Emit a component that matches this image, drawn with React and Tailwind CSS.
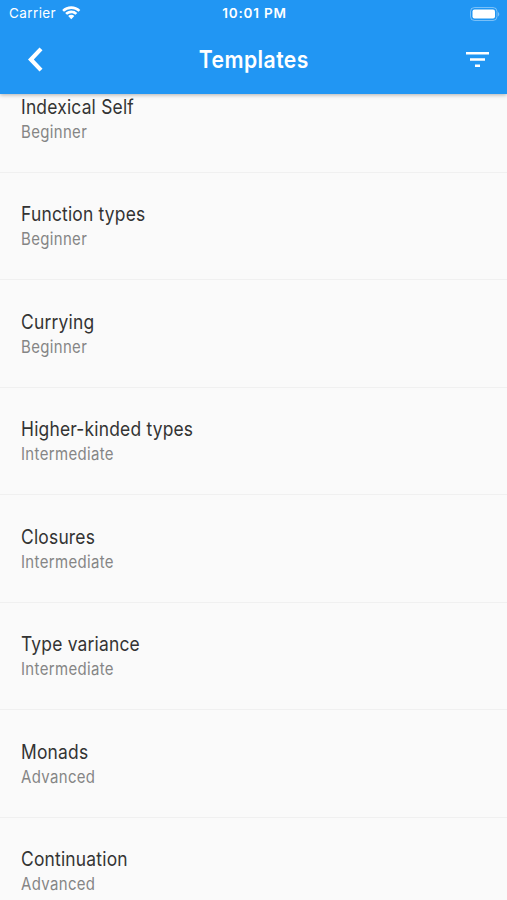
const templates = [
  { title: 'Indexical Self', level: 'Beginner' },
  { title: 'Function types', level: 'Beginner' },
  { title: 'Currying', level: 'Beginner' },
  { title: 'Higher-kinded types', level: 'Intermediate' },
  { title: 'Closures', level: 'Intermediate' },
  { title: 'Type variance', level: 'Intermediate' },
  { title: 'Monads', level: 'Advanced' },
  { title: 'Continuation', level: 'Advanced' },
]

const StatusBar = () => (
  <div className="grid h-[28px] grid-cols-3 items-center pl-[9px] pr-[7px] text-[13.5px] leading-none">
    <div className="flex items-center gap-[6px]">
      <span className="tracking-[0.4px]">Carrier</span>
      <svg className="mb-[2px]" width="18.500" height="14" viewBox="0 0 18 13" fill="currentColor">
        <path d="M9 0C5.600 0 2.500 1.300.2 3.500l1.700 1.800A10.200 10.200 0 0 1 9 2.500c2.700 0 5.200 1 7.100 2.800l1.700-1.800A12.700 12.700 0 0 0 9 0z" />
        <path d="M9 4.100c-2.300 0-4.300.9-5.900 2.300l1.800 1.900A6 6 0 0 1 9 6.700c1.600 0 3 .6 4.100 1.600l1.800-1.900A8.600 8.600 0 0 0 9 4.100z" />
        <path d="M9 8.200c-1.200 0-2.200.4-3 1.200l3 3.100 3-3.100c-.8-.8-1.800-1.200-3-1.200z" />
      </svg>
    </div>
    <span className="text-center font-semibold tracking-[0.8px]">10:01 PM</span>
    <svg className="mb-px justify-self-end" width="30" height="14" viewBox="0 0 30 14">
      <rect x="0.500" y="0.500" width="26.500" height="13" rx="4" fill="none" stroke="white" strokeOpacity="0.4" />
      <rect x="2.500" y="2.500" width="22.500" height="9" rx="2" fill="white" />
      <path d="M28 5v4.500c1.800-.7 1.800-3.800 0-4.500z" fill="white" fillOpacity="0.4" />
    </svg>
  </div>
)

const AppBar = () => (
  <header className="relative z-10 h-[94px] shrink-0 bg-[#2196f3] font-[Inter,sans-serif] text-white shadow-[0_1px_4px_rgba(0,0,0,0.3)]">
    <StatusBar />
    <div className="grid h-[63px] grid-cols-3 items-center pl-[28px] pr-[18px]">
      <button aria-label="Back">
        <svg width="15" height="25" viewBox="0 0 15 25" fill="currentColor">
          <path d="M14.500 3.200 11.500.5 0 12.500l11.500 12 3-2.700-8.700-9.300z" />
        </svg>
      </button>
      <h1 className="-ml-[10px] origin-center scale-x-[0.88] text-center text-[24px] font-semibold tracking-[0.5px]">
        Templates
      </h1>
      <button aria-label="Filter" className="justify-self-end">
        <svg width="23" height="16" viewBox="0 0 23 16" fill="currentColor">
          <path d="M0 0h23v2.500H0zM4 6.300h15v2.500H4zM9 12.500h5V15H9z" />
        </svg>
      </button>
    </div>
  </header>
)

const TemplateRow = ({ title, level }) => (
  <li className="flex h-[107.500px] shrink-0 flex-col justify-center border-b border-[#f0f0f0] pl-[20.500px] pt-[3px]">
    <p className="origin-left scale-x-[0.87] text-[20px] leading-[25px] tracking-[0.24px] text-[#333333]">{title}</p>
    <p className="origin-left scale-x-[0.88] text-[17px] leading-[25px] tracking-[0.4px] text-[#858585]">{level}</p>
  </li>
)

const App = () => (
  <div className="flex h-screen flex-col overflow-hidden bg-[#fafafa] font-[Inter,sans-serif]">
    <AppBar />
    <ul className="-mt-[29px] flex flex-col">
      {templates.map((template) => (
        <TemplateRow key={template.title} title={template.title} level={template.level} />
      ))}
    </ul>
  </div>
)

export default App
